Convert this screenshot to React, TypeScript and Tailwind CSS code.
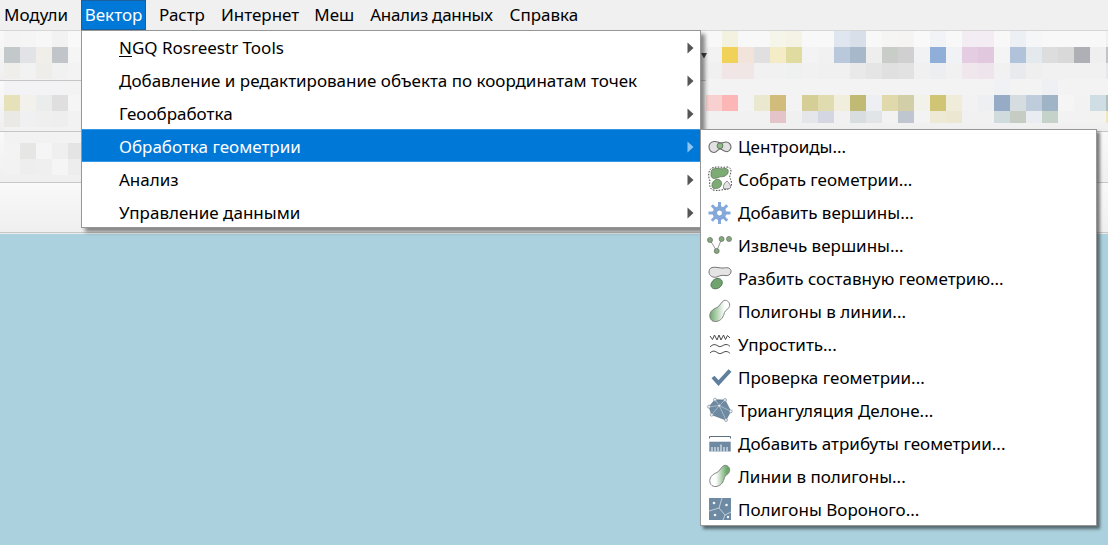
import React from "react";

const FONT = "font-['Noto_Sans','Liberation_Sans',sans-serif]";

const leftMosaic = [
  ["f4f4f4", "f5f5f5", "f7f7f7", "f2f2f2", "f9f9f9"],
  ["c3c8cb", "e1e3e6", "efeee9", "c1c5ca", "f5f5f5"],
  ["f0eeea", "f2f2f2", "eeede9", "f1f1f1", "f3f3f3"],
  ["f3f3f5", "f3f3f5", "f3f3f5", "f3f3f5", "f3f3f3"],
  ["e6e1b8", "f2f1ec", "ebeded", "dfdfdf", "f5f5f5"],
  ["eae9e5", "f0f0f2", "efeff0", "eeeeef", "f2f2f2"],
  ["f2f2f3", "f2f2f3", "f2f2f3", "f2f2f3", "f2f2f3"],
  ["f3f3f3", "e6e6e5", "f5f5f5", "efefef", "e4e4e4"],
  ["f2f2f2", "eeeeee", "efefef", "f5f5f5", "ededee"],
];

const rightMosaic = [
  ["f8f8f8", "f3f1e0", "f8f8f8", "f8f8f8", "f6f5ea", "f5f3e5", "f8f8f8", "f8f8f8", "e0e6ef", "d8dfe9", "f8f8f8", "f5f5f4", "f5f4f2", "f9f9f9", "f1f3f6", "f8f8f8", "f3ecf2", "f3ecf3", "f8f8f8", "ecf0f5", "f4f6f8", "f8f8f8", "f8f8f8", "f8f8f8", "f8f8f8", "eef1f4"],
  ["f2f2f2", "efd257", "f2e4db", "e0e0e0", "f3ecc6", "e0db9e", "f3f3f3", "f1f1f1", "b9c8da", "a8b8cb", "eeeeee", "c8cdc8", "d0d0d0", "f1f2f4", "90afd8", "f0f2f6", "e4cce2", "e2c8df", "f4f4f4", "b0c3da", "e4e9ee", "dddddd", "d9d9d9", "aeb0b5", "efefef", "c0c4c8"],
  ["f0f0f0", "f1e5e6", "f0e6e5", "f1f1f1", "f1f1f1", "eff1f0", "f1f1f1", "f0f0f0", "f0f0f0", "e9e9e9", "e5e5e5", "e0e0e0", "e2e2e2", "f0f0f0", "edeef1", "f1f1f1", "efe7ec", "eee5ec", "f1f1f1", "e9eaee", "efefef", "f1f1f1", "f1f1f1", "f1f1f1", "f1f1f1", "e4e8ec"],
  ["f3f3f3", "f3f3f3", "f3f3f3", "f3f3f3", "f3f3f3", "f3f3f3", "f3f3f3", "f3f3f3", "f3f3f3", "f3f3f3", "f3f3f3", "f3f3f3", "f3f3f3", "f3f3f3", "f3f3f3", "f3f3f3", "f3f3f3", "f3f3f3", "eff1f5", "f3f3f3", "f3f3f3", "eff0f4", "f3f3f3", "f3f3f3", "f3f3f3", "f3f3f3"],
  ["f8d0d0", "fcb6b6", "f3f3f3", "ebe8d0", "d2bc7c", "f3f3f3", "d5cf97", "e1dcb0", "f1eedd", "c1ba75", "eeeff3", "dfd9ab", "d1cea8", "f3f2ea", "cfc575", "efecd9", "f2f2f2", "eeeff2", "95abc6", "d6dde1", "bfccdc", "a0b4c8", "f5f5f5", "f2f2f2", "cfdde5", "b0c0c0"],
  ["f1f1f1", "f1f1f1", "f1f1f1", "f1f1f1", "e4c4c8", "f0f0f0", "e4e6ea", "d4d7e2", "f1f1f1", "d8dde0", "e1e5e7", "f2f2f2", "c0c6d0", "f3f3f3", "eee9d4", "ece7d0", "f1f1f1", "f1f1f1", "d0dbde", "c6cbc3", "e9edf1", "c4d2ca", "f2f2f2", "f2f2f2", "f2f2f0", "efe8bc"],
];

function Mosaic({ rows }: { rows: string[][] }) {
  return (
    <>
      {rows.map((r, i) => (
        <div key={i} className="flex h-4 shrink-0">
          {r.map((c, j) => (
            <div key={j} className="h-4 w-4 shrink-0" style={{ backgroundColor: `#${c}` }} />
          ))}
        </div>
      ))}
    </>
  );
}

const BLOB = "M16 0.5C19.5 -0.5 22.5 3 21.5 6.5C20.5 9.5 17.5 9.5 16.5 12.5C15.5 16.5 13.5 21 8 21.5C3.5 22 1 18 2 14C2.5 10.5 6.5 8.5 9 7.5C12 6 13 2 16 0.5Z";
const SLATE = "#6d8aa2";

function Svg({ children }: { children: React.ReactNode }) {
  return (
    <svg width="24" height="24" viewBox="0 0 24 24" className="shrink-0 overflow-visible">
      {children}
    </svg>
  );
}

const icons: React.ReactNode[] = [
  <Svg key="0">
    <path d="M6 6.5C9 6 11 8 13 8C15 8 16 7 18 7C21 7 23 9.5 23 12C23 15 20 17 18 16.5C15 16 14 14 12 14C10 14 9 17.5 6 17.5C3 17.5 1 15 1 12C1 9 3 7 6 6.5Z" fill="#e2e2e2" stroke="#6a6a6a" strokeWidth="1.1" />
    <circle cx="12" cy="10.8" r="2.9" fill="#8dbb86" stroke="#5c6b5c" strokeWidth="0.9" />
  </Svg>,
  <Svg key="1">
    <path d="M4 0C9 -2 14 0 19 -1C23 -1 24 3 22 7C21 9 23 11 23.5 15C24 20 20 22 16 21.5C13 22 10 23 5 22C2 21 1 17 2 13C0 9 0 2 4 0Z" fill="none" stroke="#444" strokeWidth="1" strokeDasharray="1.6 1.3" />
    <path d="M5 1C9 -0.5 13 1.5 17 0.5C21 0 21 5 18.5 7C16 9.5 13 8 10 9.5C7 11 3 11 3 7C3 4 3 2 5 1Z" fill="#7cab74" stroke="#5f7a5c" strokeWidth="0.8" />
    <path d="M8 11.5C11 10.5 14 13 13.5 16C13 20 9 21 6 20.5C3.5 20 3.5 16 5 14C6 12.5 7 12 8 11.5Z" fill="#7cab74" stroke="#5f7a5c" strokeWidth="0.8" />
    <path d="M19 13C21.5 15 23 18 22.5 20C21 21 17.5 21 15.5 20.5C15 17.5 16.5 14.5 19 13Z" fill="#e4e4e4" stroke="#777" strokeWidth="0.8" />
  </Svg>,
  <Svg key="2">
    <g stroke="#86a9dc" strokeWidth="3">
      <line x1="11.5" y1="1" x2="11.5" y2="23" />
      <line x1="0.5" y1="12" x2="22.5" y2="12" />
      <line x1="3.8" y1="4.3" x2="19.2" y2="19.7" />
      <line x1="19.2" y1="4.3" x2="3.8" y2="19.7" />
    </g>
    <circle cx="11.5" cy="12" r="6.6" fill="#86a9dc" stroke="#7298cf" strokeWidth="0.5" />
    <circle cx="11.5" cy="12" r="3" fill="#fff" stroke="#6a90c6" strokeWidth="0.8" />
  </Svg>,
  <Svg key="3">
    <path d="M2 6L8.7 17L13.6 5" fill="none" stroke="#8a8a8a" strokeWidth="0.9" />
    <circle cx="2" cy="6" r="2.5" fill="#80ab78" stroke="#6b6b6b" strokeWidth="0.7" />
    <circle cx="13.6" cy="5" r="2.5" fill="#80ab78" stroke="#6b6b6b" strokeWidth="0.7" />
    <circle cx="21" cy="5" r="2.5" fill="#80ab78" stroke="#6b6b6b" strokeWidth="0.7" />
    <circle cx="8.7" cy="17" r="2.5" fill="#80ab78" stroke="#6b6b6b" strokeWidth="0.7" />
  </Svg>,
  <Svg key="4">
    <path d="M4 0.5C8 -0.5 12 1.5 16 1C20 0 23.5 1.5 23 5C22.5 8 20 9 17 8.5C14 8 12 8.5 9 10C5 11 1 9 1 5C1 3 2 1 4 0.5Z" fill="#e4e4e4" stroke="#777" strokeWidth="1" />
    <path d="M9 11.5C13 11 15 14 14 17C13 20.5 9 22.5 5.5 21.5C2.5 20.5 2.5 17 4 15C5 13 7 11.8 9 11.5Z" fill="#6fa56c" stroke="#54705a" strokeWidth="1" />
  </Svg>,
  <Svg key="5">
    <defs>
      <linearGradient id="g-poly" x1="0" y1="0" x2="1" y2="0">
        <stop offset="0" stopColor="#6ea96c" />
        <stop offset="0.75" stopColor="#ffffff" />
      </linearGradient>
    </defs>
    <path d={BLOB} fill="url(#g-poly)" stroke="#7a7a7a" strokeWidth="0.9" />
  </Svg>,
  <Svg key="6">
    <g fill="none" stroke="#4a4a4a" strokeWidth="1">
      <path d="M2 3L4.5 6.5L6.5 2L9 7L11 2L13 7L15.5 2L17.5 6.5L19.5 2.5L22 5" />
      <path d="M2 14C5 11 7 11 10 13C13 15 15 11.5 18 11.5C20 11.5 21 12.5 22 13.5" />
      <path d="M2 20C5 17 7 18 10 20C13 22 15 18.5 18 18.5C20 18.5 21 19.5 22 20.5" />
    </g>
  </Svg>,
  <Svg key="7">
    <polyline points="5,11 10.5,17 22,4.5" fill="none" stroke="#5f7f9c" strokeWidth="4" />
  </Svg>,
  <Svg key="8">
    <polygon points="7,0.7 17,1 22.7,12.3 18,21 3.7,15.7 1,7.7" fill={SLATE} stroke="#4f6a80" strokeWidth="0.6" />
    <g stroke="#c8d3dc" strokeWidth="0.6" fill="none">
      <path d="M11.3 6.7L7 0.7M11.3 6.7L17 1M11.3 6.7L22.7 12.3M11.3 6.7L18 21M11.3 6.7L3.7 15.7M11.3 6.7L1 7.7" />
    </g>
    <g fill="#f2f2f2" stroke="#7f8f9c" strokeWidth="0.7">
      <circle cx="7" cy="0.7" r="1.5" />
      <circle cx="17" cy="1" r="1.5" />
      <circle cx="22.7" cy="12.3" r="1.5" />
      <circle cx="18" cy="21" r="1.5" />
      <circle cx="3.7" cy="15.7" r="1.5" />
      <circle cx="1" cy="7.7" r="1.5" />
      <circle cx="11.3" cy="6.7" r="1.5" />
    </g>
  </Svg>,
  <Svg key="9">
    <path d="M1.5 6.5V4.5H22.5V6.5" fill="none" stroke="#5c6f80" strokeWidth="1" />
    <rect x="1.3" y="9.7" width="21.4" height="9.8" fill={SLATE} />
    <path d="M4 19.5V15M7 19.5V15M10 19.5V15M13 19.5V12.5M16 19.5V15M19 19.5V15" stroke="#fff" strokeWidth="1" />
  </Svg>,
  <Svg key="10">
    <defs>
      <linearGradient id="g-line" x1="0" y1="0" x2="1" y2="0">
        <stop offset="0.3" stopColor="#ffffff" />
        <stop offset="0.85" stopColor="#6ea96c" />
      </linearGradient>
    </defs>
    <path d={BLOB} fill="url(#g-line)" stroke="#7a7a7a" strokeWidth="0.9" />
  </Svg>,
  <Svg key="11">
    <rect x="1" y="0" width="22" height="22" fill={SLATE} />
    <path d="M14 0L11 10L1 13M11 10L17 17L15 22M17 17L23 14" fill="none" stroke="#d5dee5" strokeWidth="0.8" />
    <g fill="#f4f6f8">
      <circle cx="6" cy="5" r="1.3" />
      <circle cx="18.5" cy="7" r="1.3" />
      <circle cx="7" cy="17" r="1.3" />
      <circle cx="20" cy="19" r="1.2" />
    </g>
  </Svg>,
];

const menus = [
  { t: "Модули", cls: "" },
  { t: "Вектор", cls: "ml-[13px] flex h-[30px] w-[65px] items-center justify-center border border-[#1a5f9e] bg-[#0078d7] text-white" },
  { t: "Растр", cls: "ml-[13px]" },
  { t: "Интернет", cls: "ml-[16px]" },
  { t: "Меш", cls: "ml-[15px]" },
  { t: "Анализ данных", cls: "ml-[16px] tracking-[-0.3px]" },
  { t: "Справка", cls: "ml-[17px]" },
];

const mainItems = [
  { first: "N", rest: "GQ Rosreestr Tools", cls: "h-[32px] pt-px" },
  { first: "Д", rest: "обавление и редактирование объекта по координатам точек", cls: "h-[33px] pt-[2px]" },
  { first: "", rest: "Геообработка", cls: "h-[33px] pt-[2px]" },
  { first: "", rest: "Обработка геометрии", cls: "h-[33px] pt-[2px] bg-[#0078d7] text-white border-y border-[#3796e2]", active: true },
  { first: "", rest: "Анализ", cls: "h-[33px] pt-[2px]" },
  { first: "", rest: "Управление данными", cls: "h-[32px] pt-[3px]" },
];

const subItems = [
  "Центроиды...",
  "Собрать геометрии...",
  "Добавить вершины...",
  "Извлечь вершины...",
  "Разбить составную геометрию...",
  "Полигоны в линии...",
  "Упростить...",
  "Проверка геометрии...",
  "Триангуляция Делоне...",
  "Добавить атрибуты геометрии...",
  "Линии в полигоны...",
  "Полигоны Вороного...",
];

const band = "shrink-0 border-b border-[#c6c6c6] bg-gradient-to-b from-[#f9f9f9] to-[#efefef]";

export default function App() {
  return (
    <div className={`relative flex h-[545px] w-[1108px] flex-col overflow-hidden bg-[#abd1de] text-[17px] text-black ${FONT}`}>
      <div className="flex h-[30px] shrink-0 items-center bg-[#f0f0f0] pl-[4px]">
        {menus.map((m) => (
          <div key={m.t} className={m.cls}>
            {m.t}
          </div>
        ))}
      </div>

      <div className="relative flex h-[204px] shrink-0 flex-col border-t border-[#d6d6d6]">
        <div className={`${band} h-[50px]`} />
        <div className={`${band} h-[51px]`} />
        <div className={`${band} h-[51px]`} />
        <div className={`${band} h-[50px]`} />
        <div className="h-px bg-[#ececec]" />
        <div className="absolute left-[4px] top-0 flex w-[78px] flex-col overflow-hidden">
          <Mosaic rows={leftMosaic} />
        </div>
        <div className="absolute left-0 top-[49px] h-px w-[82px] bg-[#c6c6c6]" />
        <div className="absolute left-0 top-[100px] h-px w-[82px] bg-[#c6c6c6]" />
        <div className="absolute left-[706px] top-0 flex h-[92px] flex-col overflow-hidden">
          <Mosaic rows={rightMosaic} />
        </div>
        <svg width="6" height="6" viewBox="0 0 6 6" className="absolute left-[701px] top-[22px]">
          <path d="M0 0H6L3 5.5Z" fill="#444" />
        </svg>
      </div>

      <div className="absolute left-[81px] top-[30px] w-[620px] border border-[#979797] bg-white shadow-[4px_4px_4px_rgba(0,0,0,0.45)]">
        {mainItems.map((i) => (
          <div key={i.rest} className={`flex items-center justify-between pl-[37px] pr-[6px] ${i.cls}`}>
            <span>
              {i.first && <span className="underline underline-offset-2">{i.first}</span>}
              {i.rest}
            </span>
            <svg width="7" height="12" viewBox="0 0 7 12" className="shrink-0">
              <path d="M0.5 0.5L6.5 6L0.5 11.5Z" fill={i.active ? "#8ec5f1" : "#555"} />
            </svg>
          </div>
        ))}
      </div>

      <div className="absolute left-[700px] top-[129px] w-[397px] border border-[#979797] bg-white shadow-[3px_3px_3px_rgba(0,0,0,0.5)]">
        {subItems.map((t, idx) => (
          <div key={t} className={`flex items-center gap-[6px] pl-[7px] ${idx === 0 ? "h-[32px] pt-px" : "h-[33px] pt-[2px]"}`}>
            {icons[idx]}
            <span>{t}</span>
          </div>
        ))}
      </div>
    </div>
  );
}
